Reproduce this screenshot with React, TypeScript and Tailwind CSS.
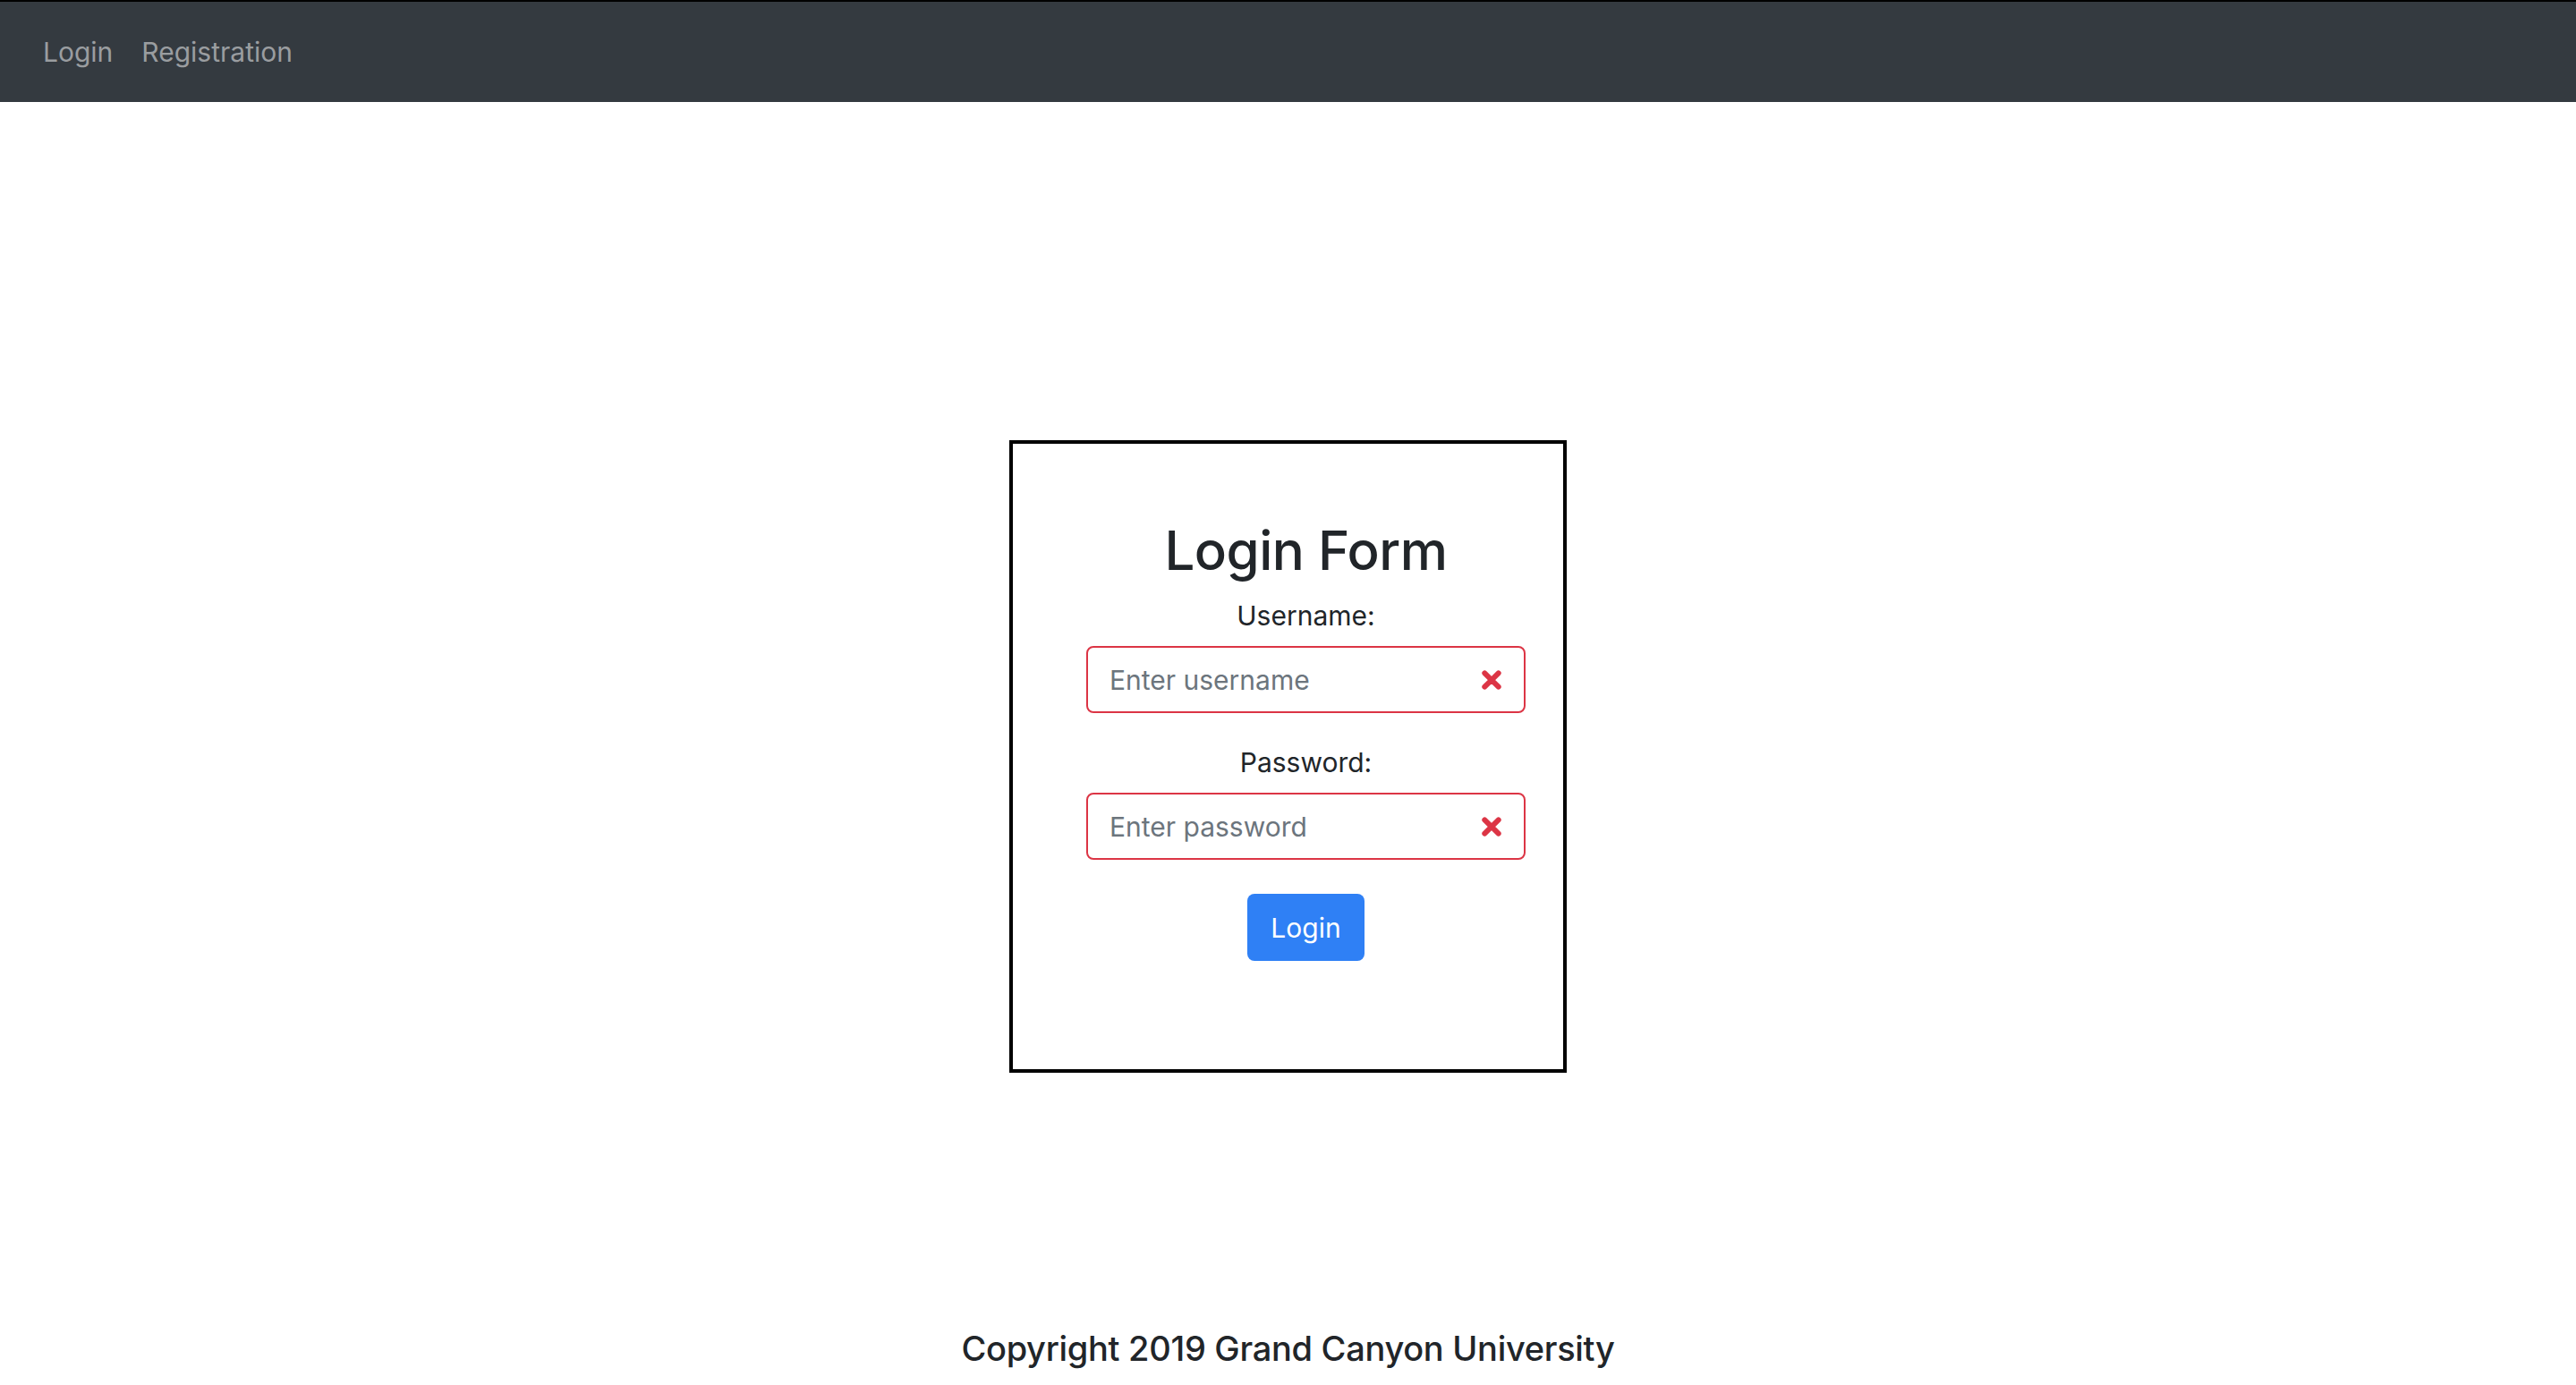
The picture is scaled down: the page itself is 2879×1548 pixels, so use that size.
import React from "react";

const InvalidIcon = () => (
  <svg viewBox="-2 -2 7 7" className="w-[36px] h-[36px] shrink-0" fill="none">
    <path d="M0 0l3 3m0-3L0 3" stroke="#dc3545" strokeWidth={1.15} strokeLinecap="round" />
  </svg>
);

const Field = ({ label, placeholder, type = "text" }: { label: string; placeholder: string; type?: string }) => (
  <div className="flex flex-col items-center w-full">
    <label className="text-[30px] leading-[48px] text-[#212529] mb-[10px]">{label}</label>
    <div className="flex items-center w-full h-[75px] border-2 border-[#dc3545] rounded-[8px] bg-white">
      <input
        type={type}
        placeholder={placeholder}
        className="flex-1 min-w-0 h-full pl-[24px] bg-transparent outline-none text-[30px] text-[#495057] placeholder:text-[#6c757d]"
      />
      <div className="mr-[18px] flex items-center">
        <InvalidIcon />
      </div>
    </div>
  </div>
);

export default function App() {
  const navLinks = ["Login", "Registration"];

  return (
    <div className="min-h-screen flex flex-col bg-white font-['Inter','Liberation_Sans',sans-serif]">
      <nav className="h-[114px] border-t-2 border-black bg-[#343a40] flex items-center px-[32px]">
        {navLinks.map((link) => (
          <a
            key={link}
            href="#"
            className="px-[16px] text-[30px] leading-[48px] text-[#9a9da0]"
          >
            {link}
          </a>
        ))}
      </nav>

      <main className="flex-1 flex flex-col items-center">
        <div className="mt-[378px] w-[623px] h-[707px] border-4 border-black flex pl-[82px] pr-[42px]">
          <form className="w-full flex flex-col items-center pt-[81px]" onSubmit={(e) => e.preventDefault()}>
            <h2 className="text-[60px] leading-[77px] font-medium tracking-[-0.5px] text-[#212529] mb-[10px]">Login Form</h2>
            <Field label="Username:" placeholder="Enter username" />
            <div className="h-[31px]" />
            <Field label="Password:" placeholder="Enter password" type="password" />
            <button
              type="submit"
              className="mt-[38px] h-[75px] w-[131px] rounded-[8px] bg-[#2f80f5] text-white text-[30px] leading-[48px]"
            >
              Login
            </button>
          </form>
        </div>
      </main>

      <footer className="flex justify-center pb-[12px]">
        <h4 className="text-[38px] leading-[58px] font-medium tracking-[-0.3px] text-[#212529]">
          Copyright 2019 Grand Canyon University
        </h4>
      </footer>
    </div>
  );
}
